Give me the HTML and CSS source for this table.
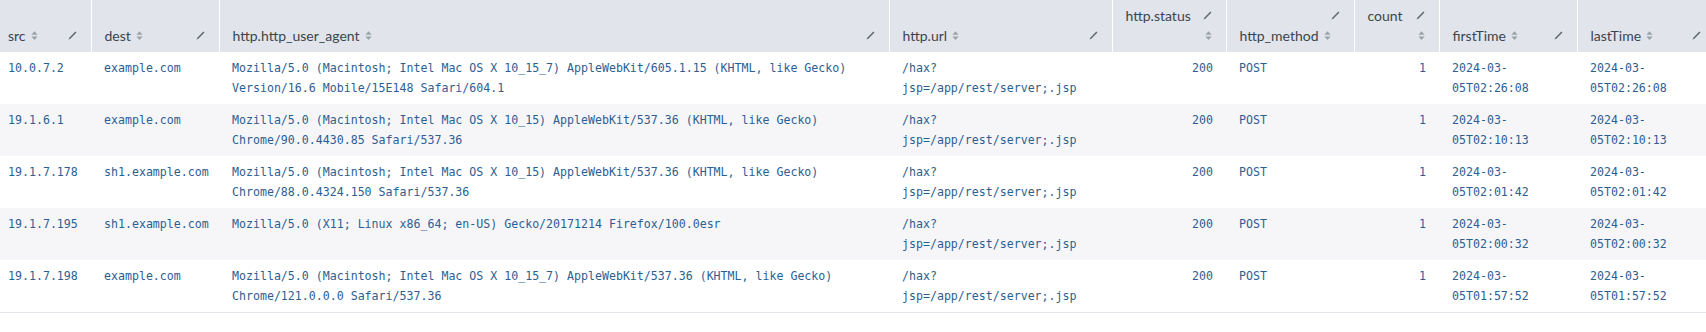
FILE: index.html
```html
<!DOCTYPE html>
<html lang="en">
<head>
    <meta charset="UTF-8">
    <title>Results table</title>
    <link rel="stylesheet" href="styles.css">
</head>
<body>
    <table class="results">
        <colgroup>
            <col class="w-src">
            <col class="w-dest">
            <col class="w-ua">
            <col class="w-url">
            <col class="w-status">
            <col class="w-method">
            <col class="w-count">
            <col class="w-time">
            <col class="w-time">
        </colgroup>
        <thead>
            <tr>
                <th class="first">
                    <div class="head">
                        <span class="label">src</span>
                        <svg class="sort" viewBox="0 0 8 12"><path d="M4 1 L7.5 5 H0.5 Z M4 11 L0.5 7 H7.5 Z"/></svg>
                        <span class="grow"></span>
                        <svg class="pencil" viewBox="0 0 10 10"><path d="M8.2 0.6 L9.4 1.8 L2.6 8.6 L0.6 9.4 L1.4 7.4 Z"/></svg>
                    </div>
                </th>
                <th>
                    <div class="head">
                        <span class="label">dest</span>
                        <svg class="sort" viewBox="0 0 8 12"><path d="M4 1 L7.5 5 H0.5 Z M4 11 L0.5 7 H7.5 Z"/></svg>
                        <span class="grow"></span>
                        <svg class="pencil" viewBox="0 0 10 10"><path d="M8.2 0.6 L9.4 1.8 L2.6 8.6 L0.6 9.4 L1.4 7.4 Z"/></svg>
                    </div>
                </th>
                <th>
                    <div class="head">
                        <span class="label">http.http_user_agent</span>
                        <svg class="sort" viewBox="0 0 8 12"><path d="M4 1 L7.5 5 H0.5 Z M4 11 L0.5 7 H7.5 Z"/></svg>
                        <span class="grow"></span>
                        <svg class="pencil" viewBox="0 0 10 10"><path d="M8.2 0.6 L9.4 1.8 L2.6 8.6 L0.6 9.4 L1.4 7.4 Z"/></svg>
                    </div>
                </th>
                <th>
                    <div class="head">
                        <span class="label">http.url</span>
                        <svg class="sort" viewBox="0 0 8 12"><path d="M4 1 L7.5 5 H0.5 Z M4 11 L0.5 7 H7.5 Z"/></svg>
                        <span class="grow"></span>
                        <svg class="pencil" viewBox="0 0 10 10"><path d="M8.2 0.6 L9.4 1.8 L2.6 8.6 L0.6 9.4 L1.4 7.4 Z"/></svg>
                    </div>
                </th>
                <th>
                    <div class="head">
                        <span class="label">http.status</span>
                        <span class="grow"></span>
                        <svg class="pencil" viewBox="0 0 10 10"><path d="M8.2 0.6 L9.4 1.8 L2.6 8.6 L0.6 9.4 L1.4 7.4 Z"/></svg>
                    </div>
                    <div class="head end">
                        <svg class="sort" viewBox="0 0 8 12"><path d="M4 1 L7.5 5 H0.5 Z M4 11 L0.5 7 H7.5 Z"/></svg>
                    </div>
                </th>
                <th>
                    <div class="head end">
                        <svg class="pencil" viewBox="0 0 10 10"><path d="M8.2 0.6 L9.4 1.8 L2.6 8.6 L0.6 9.4 L1.4 7.4 Z"/></svg>
                    </div>
                    <div class="head">
                        <span class="label">http_method</span>
                        <svg class="sort" viewBox="0 0 8 12"><path d="M4 1 L7.5 5 H0.5 Z M4 11 L0.5 7 H7.5 Z"/></svg>
                    </div>
                </th>
                <th>
                    <div class="head">
                        <span class="label">count</span>
                        <span class="grow"></span>
                        <svg class="pencil" viewBox="0 0 10 10"><path d="M8.2 0.6 L9.4 1.8 L2.6 8.6 L0.6 9.4 L1.4 7.4 Z"/></svg>
                    </div>
                    <div class="head end">
                        <svg class="sort" viewBox="0 0 8 12"><path d="M4 1 L7.5 5 H0.5 Z M4 11 L0.5 7 H7.5 Z"/></svg>
                    </div>
                </th>
                <th>
                    <div class="head">
                        <span class="label">firstTime</span>
                        <svg class="sort" viewBox="0 0 8 12"><path d="M4 1 L7.5 5 H0.5 Z M4 11 L0.5 7 H7.5 Z"/></svg>
                        <span class="grow"></span>
                        <svg class="pencil" viewBox="0 0 10 10"><path d="M8.2 0.6 L9.4 1.8 L2.6 8.6 L0.6 9.4 L1.4 7.4 Z"/></svg>
                    </div>
                </th>
                <th>
                    <div class="head">
                        <span class="label">lastTime</span>
                        <svg class="sort" viewBox="0 0 8 12"><path d="M4 1 L7.5 5 H0.5 Z M4 11 L0.5 7 H7.5 Z"/></svg>
                        <span class="grow"></span>
                        <svg class="pencil" viewBox="0 0 10 10"><path d="M8.2 0.6 L9.4 1.8 L2.6 8.6 L0.6 9.4 L1.4 7.4 Z"/></svg>
                    </div>
                </th>
            </tr>
        </thead>
        <tbody>
            <tr>
                <td class="first">10.0.7.2</td>
                <td>example.com</td>
                <td>Mozilla/5.0 (Macintosh; Intel Mac OS X 10_15_7) AppleWebKit/605.1.15 (KHTML, like Gecko) Version/16.6 Mobile/15E148 Safari/604.1</td>
                <td>/hax?<br>jsp=/app/rest/server;.jsp</td>
                <td class="num">200</td>
                <td>POST</td>
                <td class="num">1</td>
                <td>2024-03-<br>05T02:26:08</td>
                <td>2024-03-<br>05T02:26:08</td>
            </tr>
            <tr>
                <td class="first">19.1.6.1</td>
                <td>example.com</td>
                <td>Mozilla/5.0 (Macintosh; Intel Mac OS X 10_15) AppleWebKit/537.36 (KHTML, like Gecko) Chrome/90.0.4430.85 Safari/537.36</td>
                <td>/hax?<br>jsp=/app/rest/server;.jsp</td>
                <td class="num">200</td>
                <td>POST</td>
                <td class="num">1</td>
                <td>2024-03-<br>05T02:10:13</td>
                <td>2024-03-<br>05T02:10:13</td>
            </tr>
            <tr>
                <td class="first">19.1.7.178</td>
                <td>sh1.example.com</td>
                <td>Mozilla/5.0 (Macintosh; Intel Mac OS X 10_15) AppleWebKit/537.36 (KHTML, like Gecko) Chrome/88.0.4324.150 Safari/537.36</td>
                <td>/hax?<br>jsp=/app/rest/server;.jsp</td>
                <td class="num">200</td>
                <td>POST</td>
                <td class="num">1</td>
                <td>2024-03-<br>05T02:01:42</td>
                <td>2024-03-<br>05T02:01:42</td>
            </tr>
            <tr>
                <td class="first">19.1.7.195</td>
                <td>sh1.example.com</td>
                <td>Mozilla/5.0 (X11; Linux x86_64; en-US) Gecko/20171214 Firefox/100.0esr</td>
                <td>/hax?<br>jsp=/app/rest/server;.jsp</td>
                <td class="num">200</td>
                <td>POST</td>
                <td class="num">1</td>
                <td>2024-03-<br>05T02:00:32</td>
                <td>2024-03-<br>05T02:00:32</td>
            </tr>
            <tr>
                <td class="first">19.1.7.198</td>
                <td>example.com</td>
                <td>Mozilla/5.0 (Macintosh; Intel Mac OS X 10_15_7) AppleWebKit/537.36 (KHTML, like Gecko) Chrome/121.0.0.0 Safari/537.36</td>
                <td>/hax?<br>jsp=/app/rest/server;.jsp</td>
                <td class="num">200</td>
                <td>POST</td>
                <td class="num">1</td>
                <td>2024-03-<br>05T01:57:52</td>
                <td>2024-03-<br>05T01:57:52</td>
            </tr>
        </tbody>
    </table>
</body>
</html>
```

FILE: styles.css
```css
body {
    margin: 0;
    background-color: #fff;
    overflow: hidden;
    font-family: "Lato", "Open Sans", sans-serif;
}

.results {
    table-layout: fixed;
    border-collapse: collapse;
    width: 1715px;
}

.w-src { width: 91px; }
.w-dest { width: 128px; }
.w-ua { width: 670px; }
.w-url { width: 223px; }
.w-status { width: 114px; }
.w-method { width: 128px; }
.w-count { width: 85px; }
.w-time { width: 138px; }

thead tr {
    height: 52px;
    background-color: #e1e4eb;
}

th {
    vertical-align: bottom;
    padding: 5px 14px 7px 13px;
    border-left: 1px solid #fff;
    font-weight: normal;
    font-size: 14px;
    color: #3c444d;
    text-align: left;
}

th.first {
    border-left: none;
    padding-left: 8px;
}

.head {
    display: flex;
    align-items: center;
    height: 20px;
    white-space: nowrap;
}

.head.end {
    justify-content: flex-end;
}

.grow {
    flex: 1;
}

.sort {
    width: 7px;
    height: 11px;
    margin-left: 5px;
    fill: #9ca2ab;
}

.pencil {
    width: 9px;
    height: 9px;
    fill: #5f6670;
}

tbody tr {
    height: 52px;
}

tbody tr:nth-child(even) {
    background-color: #f6f6f9;
}

tbody tr:last-child {
    border-bottom: 1px solid #e3e5ea;
}

td {
    vertical-align: top;
    padding: 6px 13px 6px 13px;
    font-family: "DejaVu Sans Mono", monospace;
    font-size: 11.6px;
    line-height: 20px;
    color: #2d5e92;
}

td.first {
    padding-left: 8px;
}

td.num {
    text-align: right;
}
```
